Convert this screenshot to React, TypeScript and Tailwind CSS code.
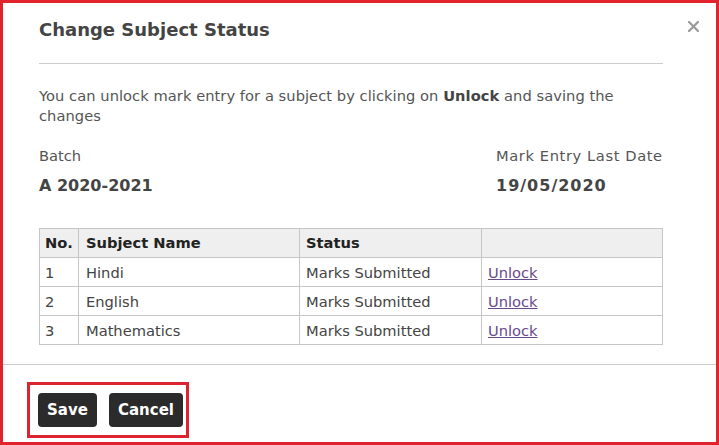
import React from 'react';

const rows = [
  { no: 1, subject: 'Hindi', status: 'Marks Submitted' },
  { no: 2, subject: 'English', status: 'Marks Submitted' },
  { no: 3, subject: 'Mathematics', status: 'Marks Submitted' },
];

const App: React.FC = () => {
  return (
    <div className="w-[719px] h-[445px] overflow-hidden bg-white border-[3px] border-[#e0232c] font-['Verdana','DejaVu_Sans',sans-serif] text-[#555]">
      {/* header */}
      <div className="flex justify-between items-start pt-[16px] pl-[36px] pr-[17px]">
        <h2 className="text-[18px] leading-[22px] font-bold text-[#444]">Change Subject Status</h2>
        <button className="mt-[2px] p-0 text-[#9a9a9a]" aria-label="Close">
          <svg width="11" height="11" viewBox="0 0 11 11">
            <path d="M1 1 L10 10 M10 1 L1 10" stroke="currentColor" strokeWidth="2.2" strokeLinecap="square" />
          </svg>
        </button>
      </div>

      <div className="pl-[36px] pr-[53px]">
        <div className="mt-[22px] h-px bg-[#cccccc]" />

        <p className="mt-[22px] text-[14.67px] leading-[20px] tracking-[0.05px]">
          You can unlock mark entry for a subject by clicking on <span className="font-bold text-[#444]">Unlock</span> and saving the changes
        </p>

        <div className="mt-[20px] flex justify-between">
          <div>
            <div className="text-[14.67px] leading-[20px]">Batch</div>
            <div className="mt-[9px] text-[16px] leading-[22px] font-bold text-[#444]">A 2020-2021</div>
          </div>
          <div className="w-[167px]">
            <div className="text-[14.67px] leading-[20px] whitespace-nowrap tracking-[0.6px]">Mark Entry Last Date</div>
            <div className="mt-[9px] text-[16px] leading-[22px] font-bold text-[#444] tracking-[1px]">19/05/2020</div>
          </div>
        </div>

        <table className="mt-[31px] w-full table-fixed border-separate border-spacing-0 border-t border-l border-[#c6c6c6] text-[14.67px] text-[#444]">
          <thead>
            <tr className="bg-[#efefef]">
              <th className="w-[39px] h-[29px] px-[5px] text-left font-bold text-[#222] border-r border-b border-[#c6c6c6]">No.</th>
              <th className="w-[221px] h-[29px] px-[7px] text-left font-bold text-[#222] border-r border-b border-[#c6c6c6]">Subject Name</th>
              <th className="w-[182px] h-[29px] px-[6px] text-left font-bold text-[#222] border-r border-b border-[#c6c6c6]">Status</th>
              <th className="h-[29px] px-[6px] border-r border-b border-[#c6c6c6]"></th>
            </tr>
          </thead>
          <tbody>
            {rows.map((r) => (
              <tr key={r.no}>
                <td className="h-[29px] px-[5px] pt-[2px] border-r border-b border-[#c6c6c6]">{r.no}</td>
                <td className="h-[29px] px-[7px] pt-[2px] border-r border-b border-[#c6c6c6]">{r.subject}</td>
                <td className="h-[29px] px-[6px] pt-[2px] border-r border-b border-[#c6c6c6] whitespace-nowrap">{r.status}</td>
                <td className="h-[29px] px-[6px] pt-[2px] border-r border-b border-[#c6c6c6]">
                  <a href="#" className="text-[#684a8a] underline">Unlock</a>
                </td>
              </tr>
            ))}
          </tbody>
        </table>
      </div>

      {/* footer */}
      <div className="mt-[19px] border-t border-[#cccccc] pt-[17px] pl-[24px]">
        <div className="inline-flex gap-[12px] border-[3px] border-[#dc2430] pl-[8px] pr-[3px] py-[8px]">
          <button className="w-[59px] h-[34px] rounded-[4px] bg-[#2b2b2b] text-white text-[15px] font-bold">Save</button>
          <button className="w-[74px] h-[34px] rounded-[4px] bg-[#2b2b2b] text-white text-[15px] font-bold">Cancel</button>
        </div>
      </div>
    </div>
  );
};

export default App;
